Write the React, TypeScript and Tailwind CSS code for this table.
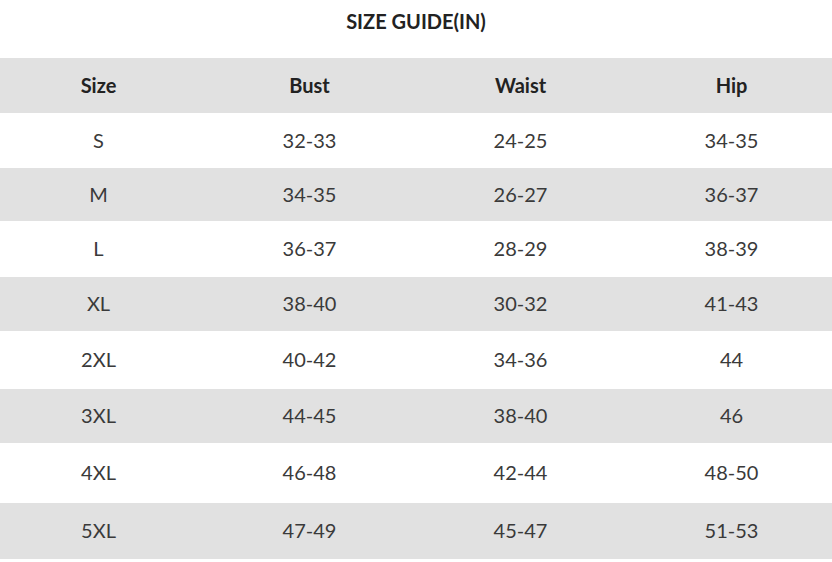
import React from 'react'

const rows = [
  { size: 'S', bust: '32-33', waist: '24-25', hip: '34-35', h: 'h-[55px]', gray: false },
  { size: 'M', bust: '34-35', waist: '26-27', hip: '36-37', h: 'h-[53px]', gray: true },
  { size: 'L', bust: '36-37', waist: '28-29', hip: '38-39', h: 'h-[56px]', gray: false },
  { size: 'XL', bust: '38-40', waist: '30-32', hip: '41-43', h: 'h-[54px]', gray: true },
  { size: '2XL', bust: '40-42', waist: '34-36', hip: '44', h: 'h-[58px]', gray: false },
  { size: '3XL', bust: '44-45', waist: '38-40', hip: '46', h: 'h-[54px]', gray: true },
  { size: '4XL', bust: '46-48', waist: '42-44', hip: '48-50', h: 'h-[60px]', gray: false },
  { size: '5XL', bust: '47-49', waist: '45-47', hip: '51-53', h: 'h-[56px]', gray: true },
]

const Cell: React.FC<{ children: React.ReactNode }> = ({ children }) => (
  <div className="w-[211px] flex items-center justify-center pb-[2px]">{children}</div>
)

export default function App() {
  return (
    <div className="w-[832px] h-[562px] bg-white overflow-hidden text-[#3a3a3a] font-['Lato',sans-serif]">
      <div className="h-[58px] pt-[8px] text-center text-[20px] leading-[26px] font-bold text-[#222]">
        SIZE GUIDE(IN)
      </div>
      <div className="w-[844px] ml-[-7px]">
        <div className="flex h-[55px] bg-[#e1e1e1] text-[20px] font-bold text-[#222]">
          <Cell>Size</Cell>
          <Cell>Bust</Cell>
          <Cell>Waist</Cell>
          <Cell>Hip</Cell>
        </div>
        {rows.map((r) => (
          <div
            key={r.size}
            className={`flex ${r.h} text-[20px] ${r.gray ? 'bg-[#e1e1e1]' : 'bg-white'}`}
          >
            <Cell>{r.size}</Cell>
            <Cell>{r.bust}</Cell>
            <Cell>{r.waist}</Cell>
            <Cell>{r.hip}</Cell>
          </div>
        ))}
      </div>
    </div>
  )
}
